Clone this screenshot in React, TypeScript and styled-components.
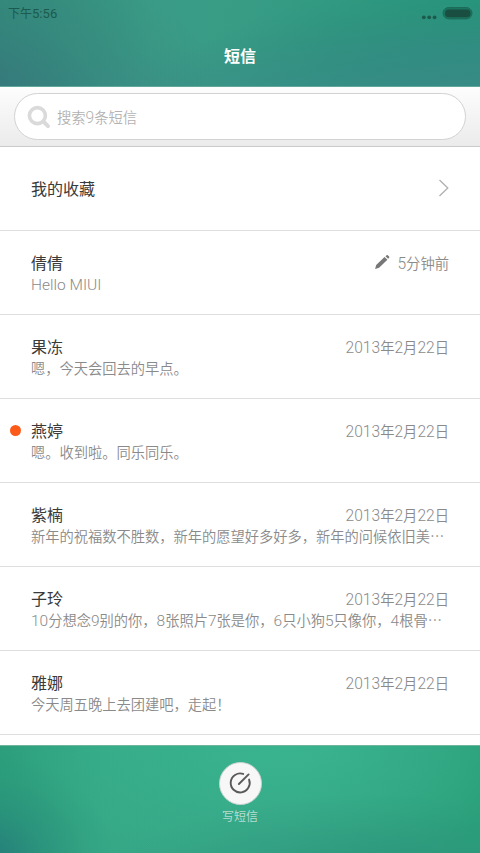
import React from "react";
import styled, { createGlobalStyle } from "styled-components";

const GlobalStyle = createGlobalStyle`
  *, *::before, *::after { box-sizing: border-box; }
  html, body { margin: 0; padding: 0; }
  body {
    font-family: "Noto Sans CJK SC", sans-serif;
    background: #fff;
    overflow: hidden;
  }
`;

const Screen = styled.div`
  display: flex;
  flex-direction: column;
  width: 480px;
  height: 853px;
  overflow: hidden;
  background: #fff;
`;

const Header = styled.header`
  display: flex;
  flex-direction: column;
  flex: none;
  height: 87px;
  border-bottom: 1px solid #62a79b;
  background:
    radial-gradient(ellipse 250px 150px at -6% 115%, rgba(54, 116, 124, 0.95), rgba(54, 122, 123, 0.4) 50%, rgba(54, 122, 123, 0) 100%),
    linear-gradient(172deg, rgba(60, 146, 138, 0) 45%, rgba(60, 142, 138, 0.75) 100%),
    radial-gradient(ellipse 300px 110px at 96% 112%, rgba(42, 130, 122, 0.95), rgba(42, 130, 122, 0.4) 55%, rgba(42, 130, 122, 0) 100%),
    linear-gradient(97deg, #338c7b 0%, #3a9c86 32%, #389c85 50%, #26967a 100%);
`;

const StatusBar = styled.div`
  display: flex;
  justify-content: space-between;
  height: 28px;
  padding: 0 7px 0 8px;
  color: #1c5a4e;
`;

const Clock = styled.span`
  font-size: 12px;
  line-height: 26px;
`;

const StatusIcons = styled.svg`
  display: block;
  width: 52px;
  height: 28px;
`;

const Title = styled.h1`
  margin: 0;
  font-size: 16px;
  font-weight: 700;
  line-height: 55px;
  text-align: center;
  color: #fff;
`;

const SearchBar = styled.div`
  flex: none;
  height: 60px;
  padding: 6px 14px 0;
  border-bottom: 1px solid #cbcbcb;
  background: linear-gradient(#fdfdfd, #ebebeb);
`;

const SearchField = styled.div`
  display: flex;
  align-items: center;
  height: 47px;
  padding-left: 12px;
  border: 1px solid #d2d2d2;
  border-radius: 24px;
  background: #fff;
  color: #b2b2b2;
  font-size: 14.3px;
  font-weight: 350;
  line-height: 20px;
`;

const SearchIcon = styled.svg`
  width: 24px;
  height: 24px;
  margin-right: 6px;
`;

const List = styled.main`
  flex: 1;
  min-height: 0;
`;

const Row = styled.div<{ $single?: boolean }>`
  position: relative;
  display: flex;
  flex-direction: column;
  justify-content: ${(p) => (p.$single ? "center" : "flex-start")};
  height: 84px;
  padding: ${(p) => (p.$single ? "0 31px 1px" : "19px 31px 0")};
  border-bottom: 1px solid #dedede;
`;

const TopLine = styled.div`
  display: flex;
  align-items: center;
  justify-content: space-between;
  height: 24px;
`;

const Name = styled.span`
  font-size: 16px;
  line-height: 24px;
  color: #3a3a3a;
`;

const Meta = styled.span`
  display: flex;
  align-items: center;
  height: 24px;
  padding-top: 2px;
  font-size: 14.3px;
  font-weight: 350;
  line-height: 22px;
  color: #8a8a8a;
  white-space: nowrap;
`;

const PencilIcon = styled.svg`
  width: 16px;
  height: 16px;
  margin: -2px 7px 0 0;
`;

const Preview = styled.div`
  height: 20px;
  font-size: 14.25px;
  font-weight: 350;
  line-height: 20px;
  color: #8a8a8a;
  white-space: nowrap;
`;

const Latin = styled.span`
  font-family: "Roboto", "Liberation Sans", sans-serif;
  font-size: 1.09em;
  line-height: 1;
`;

const Unread = styled.i`
  position: absolute;
  left: 10px;
  top: 26px;
  width: 11px;
  height: 11px;
  border-radius: 50%;
  background: #fc5a19;
`;

const Chevron = styled.svg`
  width: 12px;
  height: 18px;
`;

const Footer = styled.footer`
  display: flex;
  flex: none;
  flex-direction: column;
  align-items: center;
  height: 108px;
  padding-top: 16px;
  border-top: 1px solid #6fb59c;
  background:
    radial-gradient(ellipse 130px 110px at -3% 108%, rgba(36, 122, 122, 0.95), rgba(38, 132, 122, 0.45) 45%, rgba(38, 140, 122, 0.12) 78%, rgba(38, 140, 122, 0) 100%),
    radial-gradient(ellipse 260px 80px at 78% 120%, rgba(44, 146, 124, 0.8), rgba(44, 148, 124, 0.3) 60%, rgba(44, 148, 124, 0) 100%),
    radial-gradient(ellipse 270px 120px at 58% 0%, #39b48e, rgba(57, 180, 142, 0) 100%),
    linear-gradient(90deg, #2c9e7b 0%, #36a886 22%, #37a687 60%, #2a9f79 100%);
`;

const ComposeButton = styled.button`
  display: flex;
  align-items: center;
  justify-content: center;
  width: 43px;
  height: 43px;
  padding: 0 0 2px;
  border: 1px solid #c9d3cf;
  border-radius: 50%;
  background: #f7f7f7;
`;

const ComposeLabel = styled.span`
  margin-top: 2px;
  font-size: 12px;
  line-height: 18px;
  color: #b5dccf;
`;

/** Sets digits and Latin runs in a slightly larger sans than the Chinese text. */
function Mixed({ text }: { text: string }) {
  return (
    <span>
      {text.split(/([0-9A-Za-z][0-9A-Za-z: ]*)/).map((part, i) =>
        i % 2 ? <Latin key={i}>{part}</Latin> : part
      )}
    </span>
  );
}

interface Message {
  name: string;
  date: string;
  preview: string;
  unread?: boolean;
  draft?: boolean;
}

const messages: Message[] = [
  { name: "倩倩", date: "5分钟前", preview: "Hello MIUI", draft: true },
  { name: "果冻", date: "2013年2月22日", preview: "嗯，今天会回去的早点。" },
  { name: "燕婷", date: "2013年2月22日", preview: "嗯。收到啦。同乐同乐。", unread: true },
  { name: "紫楠", date: "2013年2月22日", preview: "新年的祝福数不胜数，新年的愿望好多好多，新年的问候依旧美⋯" },
  { name: "子玲", date: "2013年2月22日", preview: "10分想念9别的你，8张照片7张是你，6只小狗5只像你，4根骨⋯" },
  { name: "雅娜", date: "2013年2月22日", preview: "今天周五晚上去团建吧，走起！" },
];

export default function App() {
  return (
    <Screen>
      <GlobalStyle />
      <Header>
        <StatusBar>
          <Clock><Mixed text="下午5:56" /></Clock>
          <StatusIcons viewBox="0 0 52 28">
            <g fill="#1b5b4c">
              <circle cx="2.8" cy="17.3" r="1.9" />
              <circle cx="8.2" cy="17.3" r="1.9" />
              <circle cx="13.6" cy="17.3" r="1.9" />
            </g>
            <rect x="22" y="7.5" width="29" height="11.4" rx="5.7" fill="#1b745f" stroke="#1e6a58" />
            <rect x="24" y="9.6" width="25.5" height="7.6" rx="3.8" fill="#1a4e40" />
          </StatusIcons>
        </StatusBar>
        <Title>短信</Title>
      </Header>

      <SearchBar>
        <SearchField>
          <SearchIcon viewBox="0 0 24 24" fill="none" stroke="#dadada">
            <circle cx="10.4" cy="10.6" r="8" strokeWidth="3.6" />
            <path d="M16.6 16.8 L21 21.1" strokeWidth="4" strokeLinecap="round" />
          </SearchIcon>
          <Mixed text="搜索9条短信" />
        </SearchField>
      </SearchBar>

      <List>
        <Row $single>
          <TopLine>
            <Name>我的收藏</Name>
            <Chevron viewBox="0 0 12 18" fill="none" stroke="#b0b0b0" strokeWidth="1.3">
              <path d="M2.5 1 L10.8 9 L2.5 17" />
            </Chevron>
          </TopLine>
        </Row>
        {messages.map((m) => (
          <Row key={m.name}>
            {m.unread && <Unread />}
            <TopLine>
              <Name>{m.name}</Name>
              <Meta>
                {m.draft && (
                  <PencilIcon viewBox="0 0 16 16" fill="#777">
                    <path d="M1.1 15 L2.2 10.9 L10.5 3 L13.4 5.8 L5.1 13.8 Z" />
                    <path d="M11.5 2.2 L12.6 1.2 Q13.2 .8 13.8 1.3 L15.1 2.6 Q15.5 3.1 15.1 3.7 L14.1 4.8 Z" />
                  </PencilIcon>
                )}
                <Mixed text={m.date} />
              </Meta>
            </TopLine>
            <Preview><Mixed text={m.preview} /></Preview>
          </Row>
        ))}
      </List>

      <Footer>
        <ComposeButton aria-label="写短信">
          <svg width="24" height="24" viewBox="0 0 24 24" fill="none" stroke="#595959" strokeWidth="1.9">
            <path d="M15.2 2.9 A9.5 9.5 0 1 0 21.1 8.6" strokeLinecap="round" />
            <path d="M10.9 13 L20.6 3.4" strokeLinecap="round" />
          </svg>
        </ComposeButton>
        <ComposeLabel>写短信</ComposeLabel>
      </Footer>
    </Screen>
  );
}
